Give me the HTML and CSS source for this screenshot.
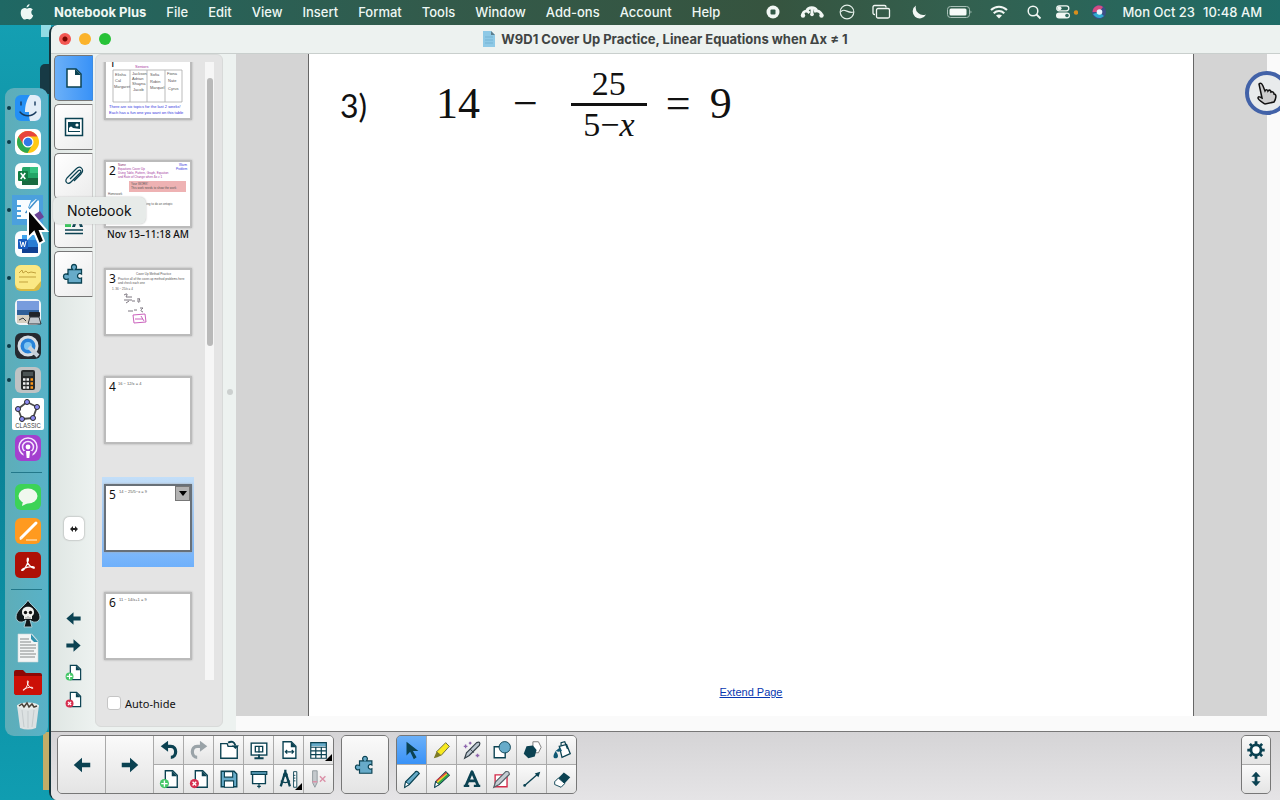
FILE: index.html
```html
<!DOCTYPE html>
<html lang="en">
<head>
    <meta charset="UTF-8">
    <meta name="viewport" content="width=device-width, initial-scale=1.0">
    <title>Notebook Plus</title>
    <link rel="stylesheet" href="styles.css">
</head>
<body>
    <!-- Shared icons -->
    <svg class="sprite" width="0" height="0">
        <symbol id="arrow-left" viewBox="0 0 24 24"><path d="M3 12l9-8v5.500h9v5h-9v5.500z" fill="#0b4252"/></symbol>
        <symbol id="arrow-right" viewBox="0 0 24 24"><path d="M21 12l-9-8v5.500H3v5h9v5.500z" fill="#0b4252"/></symbol>
        <symbol id="page-add" viewBox="0 0 24 24"><path d="M8 3h8l5 5v13H8z" fill="#fff" stroke="#0b4252" stroke-width="1.500"/><path d="M15 3v6h6z" fill="#0b4252"/><circle cx="7" cy="17" r="5" fill="#44c767"/><path d="M7 13.500v7M3.500 17h7" stroke="#fff" stroke-width="1.500"/></symbol>
        <symbol id="page-del" viewBox="0 0 24 24"><path d="M8 3h8l5 5v13H8z" fill="#fff" stroke="#0b4252" stroke-width="1.500"/><path d="M15 3v6h6z" fill="#0b4252"/><circle cx="7" cy="17" r="5" fill="#d62f4f"/><path d="M5 15l4 4M9 15l-4 4" stroke="#fff" stroke-width="1.500"/></symbol>
        <symbol id="puzzle" viewBox="0 0 24 24"><path d="M6 7.500h4.500c-2-2-1-5 1.500-5s3.500 3 1.500 5h6v4.500c-2-1.500-4 0-4 2s2 3 4 2v5H6v-4c-2 1-4.500 0-4.500-2.500S4 11.500 6 12.500z" fill="#67abc9" stroke="#0b4252" stroke-width="1.300"/></symbol>
        <symbol id="acrobat" viewBox="0 0 24 24"><path d="M3.500 19c0-3 17-7 17-3.500 0 3-11-4-9.500-11.500.5-2 2-1 1.500 1.500C11 12 6 21 3.500 19z" fill="none" stroke="#fff" stroke-width="1.600"/></symbol>
    </svg>

    <header class="menubar">
        <nav class="menus">
            <a href="#" aria-label="Apple"><svg width="14" height="16" viewBox="0 0 14 16"><path d="M9.500 0c.2 1.700-1.200 3.300-2.900 3.400C6.400 1.800 8 .2 9.500 0zM11.300 8.300c0-1.700 1.400-2.600 1.500-2.700-1-1.300-2.400-1.500-3-1.500-1.200 0-2 .7-2.700.7s-1.500-.7-2.600-.7C2.300 4.200.7 6 .7 8.900c0 3.200 2.200 6.600 3.900 6.600 1 0 1.400-.6 2.600-.6s1.500.6 2.600.6c1.500 0 3-2.500 3.400-4-.1 0-1.900-.8-1.900-3.200z" fill="#eef7f4"/></svg></a>
            <a href="#" class="app-name">Notebook Plus</a>
            <a href="#">File</a>
            <a href="#">Edit</a>
            <a href="#">View</a>
            <a href="#">Insert</a>
            <a href="#">Format</a>
            <a href="#">Tools</a>
            <a href="#">Window</a>
            <a href="#">Add-ons</a>
            <a href="#">Account</a>
            <a href="#">Help</a>
        </nav>
        <div class="status">
            <svg width="32" height="16" viewBox="0 0 32 16"><circle cx="17" cy="8" r="6.500" fill="#f2f7f4"/><rect x="14.500" y="5.500" width="5" height="5" rx="1" fill="#335a48"/></svg>
            <svg width="24" height="16" viewBox="0 0 24 16"><path d="M2.500 11.500C3 6.500 7 6 9.500 9M6.500 7C8.500 2.500 15 2.500 17 7M14 7.500c4-1.500 7 0 8 4M12 5v6" fill="none" stroke="#f2f7f4" stroke-width="2.800"/><circle cx="3" cy="11.500" r="2.200" fill="#f2f7f4"/><circle cx="12" cy="10.500" r="1.800" fill="#f2f7f4"/><circle cx="21.500" cy="11.500" r="2.200" fill="#f2f7f4"/></svg>
            <svg width="22" height="16" viewBox="0 0 22 16"><circle cx="11" cy="8" r="6.800" fill="none" stroke="#e3eee8" stroke-width="1.200"/><path d="M4.500 8c4-5 7 2 13 0" fill="none" stroke="#e3eee8" stroke-width="1.200"/></svg>
            <svg width="22" height="16" viewBox="0 0 22 16"><path d="M5 10.500H4.500A1.500 1.500 0 013 9V3a1.500 1.500 0 011.500-1.500h10A1.500 1.500 0 0116 3v.5" fill="none" stroke="#f2f7f4" stroke-width="1.300"/><rect x="6.500" y="4.500" width="13" height="9.500" rx="1.500" fill="none" stroke="#f2f7f4" stroke-width="1.300"/></svg>
            <svg width="30" height="16" viewBox="0 0 30 16"><path d="M12 1.500A7 7 0 1022 10.500 7.500 7.500 0 0112 1.500z" fill="#f2f7f4"/></svg>
            <svg width="26" height="16" viewBox="0 0 26 16"><rect x="1.500" y="2.500" width="22" height="11" rx="3" fill="none" stroke="#a9c0b8"/><rect x="3.500" y="4.500" width="17" height="7" rx="1.500" fill="#f6faf8"/><path d="M24.500 6.500v3q2-1.500 0-3z" fill="#a9c0b8"/></svg>
            <svg width="28" height="16" viewBox="0 0 28 16"><path d="M7 6c4.700-4.300 11.300-4.300 16 0M9.700 9.200c3.200-2.800 7.400-2.800 10.600 0" fill="none" stroke="#f2f7f4" stroke-width="2.100"/><path d="M12 11.500c1.800-1.400 4.200-1.400 6 0l-3 3z" fill="#f2f7f4"/></svg>
            <svg width="18" height="16" viewBox="0 0 18 16"><circle cx="9" cy="7" r="4.800" fill="none" stroke="#f2f7f4" stroke-width="1.500"/><path d="M12.500 10.500l4 4" stroke="#f2f7f4" stroke-width="1.800"/></svg>
            <svg width="24" height="16" viewBox="0 0 24 16"><rect x="2.800" y="1.800" width="12" height="5" rx="2.500" fill="none" stroke="#f2f7f4" stroke-width="1.300"/><circle cx="5.500" cy="4.300" r="2" fill="#f2f7f4"/><rect x="2" y="8.500" width="14" height="6" rx="3" fill="#f2f7f4"/><circle cx="13" cy="11.500" r="1.800" fill="#336b61"/><circle cx="22" cy="8.500" r="2.200" fill="#d98f1d"/></svg>
            <svg width="16" height="16" viewBox="0 0 16 16"><circle cx="9" cy="8" r="7" fill="#3b4f87"/><path d="M2.500 8C3 2 9 0 13 3L9 8z" fill="#d54c80"/><path d="M3 10c3 5 8 5 11 2L9 8z" fill="#2dacd0"/><circle cx="9.500" cy="8" r="2.800" fill="#e8f6ff"/></svg>
            <span class="date">Mon Oct 23</span><span>10:48 AM</span>
        </div>
    </header>

    <main class="desktop">
        <div class="behind file-corner"></div>
        <div class="behind dark-corner"></div>
        <div class="behind folder-edge"></div>

        <aside class="dock">
            <a href="#" class="open" aria-label="Finder"><svg viewBox="0 0 34 34"><rect x="4" y="4" width="26" height="26" rx="6" fill="#2490f5"/><path d="M19 4h5a6 6 0 016 6v14a6 6 0 01-6 6h-5c-1-3-1-6-1-9h-4C14 14 16 8 19 4z" fill="#e2edf7"/><path d="M10 11v3M24 11v3M9 21c4 5 12 5 16 0" stroke="#173a5e" stroke-width="1.400" fill="none" stroke-linecap="round"/></svg></a>
            <a href="#" class="open" aria-label="Chrome"><svg viewBox="0 0 34 34"><rect x="4" y="4" width="26" height="26" rx="6" fill="#fff"/><circle cx="17" cy="17" r="11" fill="#ffc914"/><path d="M7.500 11.500A11 11 0 0126.500 11.500H17l-5 8z" fill="#e8453c"/><path d="M7.500 11.500a11 11 0 009 16.500l5-8.500-9 .5z" fill="#2da94f"/><circle cx="17" cy="17" r="5.500" fill="#fff"/><circle cx="17" cy="17" r="4.300" fill="#3379e5"/></svg></a>
            <a href="#" aria-label="Excel"><svg viewBox="0 0 34 34"><rect x="4" y="4" width="26" height="26" rx="6" fill="#fbfdfc"/><rect x="11" y="8" width="16" height="18" rx="1.500" fill="#23a566"/><path d="M19 8h8v6h-8z" fill="#36c481"/><path d="M11 19h16v7H11z" fill="#17693f"/><rect x="7" y="12" width="10" height="10" rx="1" fill="#107c41"/><path d="M9.700 14l4.600 6M14.300 14l-4.600 6" stroke="#fff" stroke-width="1.600"/></svg></a>
            <a href="#" class="open active" aria-label="Notebook"><svg viewBox="0 0 34 34"><rect x="1" y="2" width="31" height="30" fill="#4ba0dd"/><path d="M6 7h14L15 20l13-13v19H6v-2h4v-2H6v-3h4v-2H6v-3h4v-2H6z" fill="#f8fcff"/><path d="M16 19l4-9 5-4 3 3z" fill="#f8fcff"/><path d="M14.500 20L26 7" stroke="#3d8fcc" stroke-width="1.500"/><path d="M23 22l6-4 4 6-6 4z" fill="#6b4497"/></svg></a>
            <a href="#" aria-label="Word"><svg viewBox="0 0 34 34"><rect x="4" y="4" width="26" height="26" rx="6" fill="#fbfdff"/><rect x="11" y="8" width="16" height="18" rx="1.500" fill="#2b7cd3"/><path d="M11 8h16v5H11z" fill="#41a5ee"/><path d="M11 20h16v6H11z" fill="#103f91"/><rect x="7" y="12" width="10" height="10" rx="1" fill="#185abd"/><path d="M9 14l1.500 6 1.500-5 1.500 5 1.500-6" fill="none" stroke="#fff"/></svg></a>
            <a href="#" class="open" aria-label="Stickies"><svg viewBox="0 0 34 34"><rect x="4" y="4" width="26" height="26" rx="6" fill="#d8b944"/><path d="M10 4h14a6 6 0 016 6v10l-7 8H10a6 6 0 01-6-6V10a6 6 0 016-6z" fill="#fae884"/><path d="M8 12l3-3 1 3 3-2 2 2 3-1 5 1M8 16h17M8 21h9" fill="none" stroke="#c1a13d"/></svg></a>
            <a href="#" aria-label="Preview"><svg viewBox="0 0 34 34"><rect x="4" y="4" width="26" height="26" rx="5" fill="#f2f5f9"/><rect x="6" y="6" width="22" height="13" fill="#789cdd"/><path d="M6 15h22v5H6z" fill="#305f98"/><path d="M6 20h22v8H6z" fill="#d7cfc0"/><path d="M8 25l4-2 3 3" stroke="#34393e" fill="none"/><rect x="18" y="17" width="11" height="5" rx="1" fill="#202428"/><path d="M19 22h9l2 7H17z" fill="#c1c7cc" stroke="#30353a"/></svg></a>
            <a href="#" class="open" aria-label="QuickTime Player"><svg viewBox="0 0 34 34"><rect x="4" y="4" width="26" height="26" rx="6" fill="#252a31"/><circle cx="17" cy="17" r="9" fill="#2883da" stroke="#d6dde4" stroke-width="3"/><circle cx="17" cy="17" r="4" fill="#7cc4f3"/><path d="M18 18l9 9" stroke="#c7d0d9" stroke-width="4"/></svg></a>
            <a href="#" class="open" aria-label="Calculator"><svg viewBox="0 0 34 34"><rect x="4" y="4" width="26" height="26" rx="6" fill="#bfc3c4"/><rect x="10" y="7" width="14" height="20" rx="2" fill="#26292a"/><path d="M12 9h10v4H12z" fill="#4b5354"/><path d="M12 16.500h7M12 20.500h7M12 24.500h7" stroke="#f0f0f0" stroke-width="2.500" stroke-dasharray="2.500 1"/><path d="M19.500 16.500H22M19.500 20.500H22M19.500 24.500H22" stroke="#ff9818" stroke-width="2.500"/></svg></a>
            <a href="#" aria-label="GeoGebra Classic"><svg viewBox="0 0 34 34"><rect x="1" y="1" width="32" height="32" rx="2" fill="#fff"/><path d="M16 5l10 5-4 11-11 1-4-10z" fill="none" stroke="#4c4c4c" stroke-width="1.800" stroke-linejoin="round"/><g fill="#8e8cf2" stroke="#292929"><circle cx="16" cy="5" r="2.500"/><circle cx="26" cy="10" r="2.500"/><circle cx="22" cy="21" r="2.500"/><circle cx="11" cy="22" r="2.500"/><circle cx="7" cy="12" r="2.500"/></g><text x="17" y="31" text-anchor="middle" class="geo-label">CLASSIC</text></svg></a>
            <a href="#" aria-label="Podcasts"><svg viewBox="0 0 34 34"><rect x="4" y="4" width="26" height="26" rx="6" fill="#a340cf"/><circle cx="17" cy="16" r="9" fill="none" stroke="#f6e5ff" stroke-width="1.500"/><circle cx="17" cy="16" r="5.500" fill="none" stroke="#f6e5ff" stroke-width="1.500"/><path d="M12.500 20h9v6h-9z" fill="#a340cf"/><circle cx="17" cy="16" r="2.400" fill="#fff"/><path d="M15 20h4l-.7 7h-2.600z" fill="#fff"/></svg></a>
            <hr>
            <a href="#" aria-label="Messages"><svg viewBox="0 0 34 34"><rect x="4" y="4" width="26" height="26" rx="6" fill="#3cd357"/><ellipse cx="17" cy="16" rx="9.500" ry="7.500" fill="#f0f8ee"/><path d="M12 21l-1 5 6-3z" fill="#f0f8ee"/></svg></a>
            <a href="#" aria-label="Pages"><svg viewBox="0 0 34 34"><rect x="4" y="4" width="26" height="26" rx="6" fill="#ff9a1f"/><path d="M10 24L25 9" stroke="#fff" stroke-width="3" stroke-linecap="round"/><path d="M9 26l2-3M15 26h11" stroke="#fff3de"/></svg></a>
            <a href="#" aria-label="Acrobat"><svg viewBox="0 0 34 34"><rect x="4" y="4" width="26" height="26" rx="5" fill="#ad1006"/><use href="#acrobat" x="8" y="8" width="18" height="18"/></svg></a>
            <hr>
            <a href="#" aria-label="Spade"><svg viewBox="0 0 34 34"><path d="M17 3c3 6 12 10 12 17 0 5-6 7-10 3l2 7h-8l2-7c-4 4-10 2-10-3C5 13 14 9 17 3z" fill="#111719" stroke="#a7cbd3"/><path d="M11 15c0-7 12-7 12 0 0 3-1 3-2 4v3h-8v-3c-1-1-2-1-2-4z" fill="#f0f0ed"/><circle cx="14.500" cy="15.500" r="1.700" fill="#111"/><circle cx="19.500" cy="15.500" r="1.700" fill="#111"/><path d="M15 20v2M17 19v3M19 20v2" stroke="#555" stroke-width=".6"/></svg></a>
            <a href="#" aria-label="Document"><svg viewBox="0 0 34 34"><path d="M7 3h14l6 7v21H7z" fill="#f3f5f5" stroke="#ced7d9" stroke-width=".6"/><path d="M20 3l7 8h-4l-3-3z" fill="#3193af"/><path d="M9 8h9M9 11h11M9 14h16M9 17h16M9 20h14M9 23h16M9 26h15" stroke="#858989"/></svg></a>
            <a href="#" aria-label="Acrobat folder"><svg viewBox="0 0 34 34"><path d="M3 7q0-2 2-2h7l3 3h14q2 0 2 2v17q0 3-3 3H6q-3 0-3-3z" fill="#8e0805"/><path d="M3 11h28v16q0 3-3 3H6q-3 0-3-3z" fill="#cc1007"/><use href="#acrobat" x="10" y="14" width="14" height="14"/></svg></a>
            <a href="#" aria-label="Trash"><svg viewBox="0 0 34 34"><path d="M6 6h22l-3 23q-8 3-16 0z" fill="#dce1e2"/><path d="M11 11l2 17M17 12v17M23 11l-2 17" stroke="#c5cbcd"/><ellipse cx="17" cy="7" rx="11" ry="3.500" fill="#e9edea"/><path d="M8 7l3-2 2 3 3-4 2 4 3-3 2 3 3-1" stroke="#494238" stroke-width="1.500" fill="none"/></svg></a>
        </aside>

        <section class="window">
            <div class="titlebar">
                <div class="lights">
                    <button class="close" aria-label="Close"></button>
                    <button class="minimize" aria-label="Minimize"></button>
                    <button class="zoom" aria-label="Zoom"></button>
                </div>
                <h1><svg width="12" height="16" viewBox="0 0 12 16"><path d="M0 0h8l4 4v12H0z" fill="#8ec9e6"/><path d="M8 0v4h4z" fill="#5c7d8d"/><path d="M2 6h8M2 9h8M2 12h8" stroke="#74b3d3"/></svg>W9D1 Cover Up Practice, Linear Equations when Δx ≠ 1</h1>
            </div>

            <div class="workspace">
                <div class="rail">
                    <button class="tab selected" aria-label="Page Sorter"><svg viewBox="0 0 24 24"><path d="M5 3h9l5 5v13H5z" fill="#fff" stroke="#0b4252" stroke-width="1.500"/><path d="M13 3v6h6z" fill="#0b4252"/></svg></button>
                    <button class="tab" aria-label="Gallery"><svg viewBox="0 0 24 24"><rect x="3.500" y="3.500" width="17" height="17" fill="#fff" stroke="#0b4252" stroke-width="1.500"/><path d="M6 7h12v10H6z" fill="#0b4252"/><path d="M7 13q2-3 4 0l7 1v2H7z" fill="#fff"/><circle cx="15" cy="10" r="1.600" fill="#fff"/></svg></button>
                    <button class="tab" aria-label="Attachments"><svg viewBox="0 0 24 24"><path d="M8 15l8-8c2-2 4 0 2 2l-9 9c-3 3-7 0-4-4l9-9c4-4 9 0 5 5l-7 7" fill="none" stroke="#0b4252" stroke-width="1.200"/></svg></button>
                    <button class="tab" aria-label="Properties"><svg viewBox="0 0 24 24"><rect x="3" y="7" width="6" height="7" fill="#35c759"/><path d="M10 14l4-11h3l4 11h-3l-1-3h-3l-1 3z" fill="#0b4252"/><path d="M3 17h18M3 20.500h18" stroke="#0b4252" stroke-width="1.500"/></svg></button>
                    <button class="tab" aria-label="Add-ons"><svg viewBox="0 0 24 24"><use href="#puzzle"/></svg></button>
                    <button class="swap" aria-label="Move sidebar"><svg width="8" height="6" viewBox="0 0 8 6"><path d="M0 3l3-3v2h2V0l3 3-3 3V4H3v2z" fill="#222"/></svg></button>
                    <button class="step" aria-label="Previous page"><svg><use href="#arrow-left"/></svg></button>
                    <button class="step" aria-label="Next page"><svg><use href="#arrow-right"/></svg></button>
                    <button class="step" aria-label="Add page"><svg><use href="#page-add"/></svg></button>
                    <button class="step" aria-label="Delete page"><svg><use href="#page-del"/></svg></button>
                </div>

                <div class="sorter">
                    <div class="list">
                        <ul>
                            <li>
                                <div class="thumb"><span class="num">1</span>
                                    <svg viewBox="0 0 84 64"><g class="mini"><text x="29" y="14" fill="#a53aa0">Seniors</text><path d="M7 16h69v32H7zM24 16v32M41 16v32M59 16v32" fill="none" stroke="#aaa" stroke-width=".8"/><text x="9" y="22">Elisha</text><text x="9" y="28">Cal</text><text x="8" y="34">Margaret</text><text x="26" y="21">Jackson</text><text x="26" y="26">Adrian</text><text x="26" y="31">Shayna</text><text x="27" y="37">Jacob</text><text x="44" y="22">Sofia</text><text x="44" y="29">Robin</text><text x="44" y="35">Marquel</text><text x="61" y="21">Fiona</text><text x="62" y="28">Nate</text><text x="62" y="36">Cyrus</text><text x="3" y="54" fill="#3434e0">There are six topics for the last 2 weeks!</text><text x="3" y="60" fill="#3434e0">Each has a fun one you want on this table</text></g></svg>
                                </div>
                            </li>
                            <li>
                                <div class="thumb"><span class="num">2</span>
                                    <svg viewBox="0 0 84 64"><g class="mini small"><text x="12" y="4" fill="#8c326e">Name</text><text x="12" y="8" fill="#a53aa0">Equations Cover Up</text><text x="12" y="12" fill="#a53aa0">Using Table, Pattern, Graph, Equation</text><text x="12" y="16" fill="#a53aa0">and Rate of Change when Δx ≠ 1</text><text x="73" y="4" fill="#3434e0">Warm</text><text x="70" y="8" fill="#3434e0">Problem</text><rect x="23" y="19" width="57" height="11" fill="#eeb2b3"/><text x="25" y="23">Your WORK!</text><text x="25" y="27">This work needs to show the work</text><text x="2" y="33">Homework</text><text x="38" y="43">thing to do an ontopic</text></g></svg>
                                </div>
                                <p>Nov 13–11:18 AM</p>
                            </li>
                            <li>
                                <div class="thumb"><span class="num">3</span>
                                    <svg viewBox="0 0 84 64"><g class="mini small"><text x="30" y="5">Cover Up Method Practice</text><text x="12" y="10">Practice all of the cover-up method problems here</text><text x="12" y="14">and check each one</text><text x="6" y="20">1.   36 − 25/x = 4</text></g><path d="M18 25q5-3 2 2h6M18 30h8M20 33l3-2M26 31h3M32 28v4q3 1 1-4M22 41h5M28 40h3M34 38h3q-4 3 0 4" fill="none" stroke="#7d7780"/><path d="M27 45l12-1 1 8-12 1z M29 49h8M35 46l3 5" fill="none" stroke="#cb62bd"/></svg>
                                </div>
                            </li>
                            <li>
                                <div class="thumb"><span class="num">4</span>
                                    <svg viewBox="0 0 84 64"><g class="mini"><text x="12" y="7">16  −  12/x = 4</text></g></svg>
                                </div>
                            </li>
                            <li class="current">
                                <div class="thumb"><span class="num">5</span>
                                    <svg viewBox="0 0 84 64"><g class="mini"><text x="13" y="7">14  −  25/5−x = 9</text></g></svg>
                                    <button aria-label="Page menu"><svg width="10" height="7" viewBox="0 0 10 7"><path d="M1 1h8L5 6z"/></svg></button>
                                </div>
                            </li>
                            <li>
                                <div class="thumb"><span class="num">6</span>
                                    <svg viewBox="0 0 84 64"><g class="mini"><text x="13" y="7">11  −  14/x+1 = 9</text></g></svg>
                                </div>
                            </li>
                        </ul>
                        <div class="scrollbar"><div class="handle"></div></div>
                    </div>
                    <label class="auto-hide"><input type="checkbox">Auto-hide</label>
                </div>

                <div class="splitter"></div>

                <div class="canvas">
                    <article class="page">
                        <div class="problem">
                            <span class="label">3)</span>
                            <span>14</span>
                            <span class="minus">−</span>
                            <span class="fraction"><span class="top">25</span><span>5−<i>x</i></span></span>
                            <span>=</span>
                            <span>9</span>
                        </div>
                        <a href="#" class="extend">Extend Page</a>
                    </article>
                </div>
            </div>

            <footer class="toolbar">
                <div class="tools main-tools">
                    <button class="big" aria-label="Previous page"><svg><use href="#arrow-left"/></svg></button>
                    <button class="big" aria-label="Next page"><svg><use href="#arrow-right"/></svg></button>
                    <button aria-label="Undo"><svg viewBox="0 0 24 24"><path d="M9 8h5c7 0 7 12 0 12" fill="none" stroke="#0b4252" stroke-width="3.500"/><path d="M3 8l8-6v12z" fill="#0b4252"/></svg></button>
                    <button aria-label="Redo"><svg viewBox="0 0 24 24"><path d="M15 8h-5c-7 0-7 12 0 12" fill="none" stroke="#9aa3a8" stroke-width="3.500"/><path d="M21 8l-8-6v12z" fill="#9aa3a8"/></svg></button>
                    <button aria-label="Open"><svg viewBox="0 0 24 24"><path d="M3 5h7l1 3h10v13H3z" fill="#fff" stroke="#0b4252" stroke-width="1.500"/><path d="M11 4q6-3 8 3" fill="none" stroke="#0b4252" stroke-width="2"/><path d="M15 7h8l-4 4z" fill="#0b4252"/></svg></button>
                    <button aria-label="Dual page display"><svg viewBox="0 0 24 24"><rect x="3.500" y="4.500" width="17" height="13" fill="#fff" stroke="#0b4252" stroke-width="1.500"/><path d="M8 8h8v6H8zM12 8v7" fill="none" stroke="#0b4252" stroke-width="1.500"/><path d="M12 17v3M7 21h10" stroke="#0b4252" stroke-width="2"/></svg></button>
                    <button aria-label="Fit page width"><svg viewBox="0 0 24 24"><path d="M5.500 3h9l5 5v13h-14z" fill="#fff" stroke="#0b4252" stroke-width="1.500"/><path d="M14 3v6h6z" fill="#0b4252"/><path d="M8 14h9M10 12l-2 2 2 2M15 12l2 2-2 2" stroke="#0b4252" stroke-width="1.300" fill="none"/></svg></button>
                    <button class="more" aria-label="Table"><svg viewBox="0 0 24 24"><path d="M3 4h17v17H3z" fill="#fff"/><path d="M3 4h17v4H3z" fill="#67abc9"/><path d="M3 4h17v17H3zM3 9h17M3 13h17M3 17h17M8.500 9v12M14.500 9v12" fill="none" stroke="#0b4252" stroke-width="1.300"/></svg></button>
                    <button aria-label="Add page"><svg><use href="#page-add"/></svg></button>
                    <button aria-label="Delete page"><svg><use href="#page-del"/></svg></button>
                    <button aria-label="Save"><svg viewBox="0 0 24 24"><path d="M3.500 3.500h14l3 3v14h-17z" fill="#67abc9" stroke="#0b4252" stroke-width="1.500"/><path d="M7 4h9v6H7zM7 14h10v7H7z" fill="#fff" stroke="#0b4252" stroke-width="1.200"/></svg></button>
                    <button aria-label="Screen shade"><svg viewBox="0 0 24 24"><path d="M5 7h14v10H5z" fill="#fff" stroke="#0b4252" stroke-width="1.500"/><path d="M3.500 4h17v3h-17z" fill="#67abc9" stroke="#0b4252" stroke-width="1.300"/><path d="M12 17v5M10 20h4" stroke="#0b4252" stroke-width="1.300"/></svg></button>
                    <button class="more" aria-label="Measurement tools"><svg viewBox="0 0 24 24"><path d="M8 2v4M7 7L3 20M9 7l4 13" fill="none" stroke="#0b4252" stroke-width="2.500"/><path d="M3 14q5 4 10 0" fill="none" stroke="#0b4252" stroke-width="1.300"/><circle cx="8" cy="7" r="2.500" fill="#0b4252"/><path d="M17 4h3.500v17H17z" fill="#fff" stroke="#0b4252"/><path d="M17 8h2M17 11h2M17 14h2" stroke="#0b4252"/></svg></button>
                    <button aria-label="Remove pen"><svg viewBox="0 0 24 24"><path d="M5 3h5v13l-2.500 5L5 16z" fill="#c4c9cd" stroke="#8f999e"/><path d="M5 15h5M13 9l6 6M19 9l-6 6" stroke="#db91a8" stroke-width="1.500"/></svg></button>
                </div>

                <div class="tools">
                    <button class="big" aria-label="Add-ons"><svg><use href="#puzzle"/></svg></button>
                </div>

                <div class="tools draw-tools">
                    <button class="selected" aria-label="Select"><svg viewBox="0 0 24 24"><path d="M6 3l13 10h-6l4 7-3 2-4-8-4 4z" fill="#0b4252"/></svg></button>
                    <button aria-label="Highlighter"><svg viewBox="0 0 24 24"><path d="M16 4l4 4-9 10-5-4z" fill="#f7e920" stroke="#636238"/><path d="M6 14l5 4-4 2-4 1z" fill="#7d7b27"/></svg></button>
                    <button aria-label="Magic pen"><svg viewBox="0 0 24 24"><path d="M17 4q5-2 3 3l-11 11-5 3 2-6z" fill="#bac5cf" stroke="#344149" stroke-width="1.300"/><path d="M10 11l4 4" stroke="#344149"/><path d="M5 6v4M3 8h4M10 3v3M8.500 4.500h3M18 16v4M16 18h4" stroke="#8d65ad" stroke-width="1.500"/></svg></button>
                    <button aria-label="Shapes"><svg viewBox="0 0 24 24"><path d="M3.500 8.500h12v12h-12z" fill="#fff" stroke="#0b4252" stroke-width="1.500"/><circle cx="15" cy="9" r="6.200" fill="#67abc9" stroke="#0b4252"/></svg></button>
                    <button aria-label="Polygon"><svg viewBox="0 0 24 24"><path d="M13 3h6l3 6-3 6h-6z" fill="#fff" stroke="#777"/><path d="M6 8l7-1 4 5-2 7-7 2-5-5z" fill="#0b4252"/></svg></button>
                    <button aria-label="Fill"><svg viewBox="0 0 24 24"><path d="M9 8l8-2 4 10-9 4z" fill="#fff" stroke="#0b4252" stroke-width="1.400"/><path d="M11 7V4l4-1 3 8" fill="none" stroke="#0b4252" stroke-width="1.300"/><path d="M5 13c4 5 3 8 0 8s-3-3 0-8zM5 13l5-4 2 4-4 1z" fill="#0f5873"/></svg></button>
                    <button aria-label="Pen"><svg viewBox="0 0 24 24"><path d="M15 5q2-3 5 1L9 18l-5 3 1-6z" fill="#67abc9" stroke="#0b4252" stroke-width="1.300"/><path d="M5 15l4 3-5 3z" fill="#fff" stroke="#0b4252"/></svg></button>
                    <button aria-label="Crayon"><svg viewBox="0 0 24 24"><path d="M16 4l4 4L9 18l-5 3 1-6z" fill="#f2d22a" stroke="#0b4252" stroke-width="1.200"/><path d="M6 14L17 5" stroke="#da3b46" stroke-width="1.500"/><path d="M8 17L19 7" stroke="#2aa652" stroke-width="2"/><path d="M5 15l4 3-5 3z" fill="#fff" stroke="#0b4252"/></svg></button>
                    <button aria-label="Text"><svg viewBox="0 0 24 24"><path d="M5.500 19L12 4l6.500 15M8 14h8" fill="none" stroke="#0b4252" stroke-width="3" stroke-linejoin="round"/><path d="M3 19.500h6M14 19.500h7" stroke="#0b4252" stroke-width="2.500"/></svg></button>
                    <button aria-label="Shape recognition pen"><svg viewBox="0 0 24 24"><path d="M4.500 7.500h13v13h-13z" fill="#fff" stroke="#d42b4a" stroke-width="1.500"/><path d="M16 4q4-1 4 3L9 18l-6 3 2-6z" fill="#c3ccd2" stroke="#566168" stroke-width="1.300"/></svg></button>
                    <button aria-label="Line"><svg viewBox="0 0 24 24"><path d="M4 19L19 6" stroke="#0b4252" stroke-width="1.500"/><circle cx="4" cy="19" r="1.500" fill="#0b4252"/><path d="M21 4l-2 6-4-4z" fill="#0b4252"/></svg></button>
                    <button aria-label="Eraser"><svg viewBox="0 0 24 24"><path d="M14 5l7 5-9 10-8-5z" fill="#0b4252"/><path d="M8 11l7 6-4 4-7-3v-3z" fill="#fff" stroke="#0b4252"/></svg></button>
                </div>

                <div class="tools side-tools">
                    <button aria-label="Customize"><svg viewBox="0 0 24 24"><circle cx="12" cy="12" r="5.500" fill="#fff" stroke="#0b4252" stroke-width="3"/><path d="M12 2.500v4M12 17.500v4M2.500 12h4M17.500 12h4M5.300 5.300l2.800 2.800M15.900 15.900l2.800 2.800M5.300 18.700l2.800-2.800M15.900 8.100l2.800-2.800" stroke="#0b4252" stroke-width="3"/></svg></button>
                    <button aria-label="Move toolbar"><svg viewBox="0 0 24 24"><path d="M12 4l5 5.500h-3.500v5H17L12 20l-5-5.500h3.500v-5H7z" fill="#0b4252"/></svg></button>
                </div>
            </footer>
        </section>

        <div class="tooltip" role="tooltip">Notebook</div>
        <svg class="pointer" width="24" height="40" viewBox="0 0 24 40"><path d="M2 2v29l6-6 5 12 5-3-4-10h7z" fill="#050505" stroke="#fff" stroke-width="2"/></svg>
        <div class="spotlight"><svg width="24" height="24" viewBox="0 0 24 24"><path d="M4 3c2-2 3 0 4 2l2 5c1-2 3-1 3 0 2-2 3 0 3 1 2-1 3 1 3 2 3 0 2 5 0 8l-9 2c-3-2-7-4-7-6 0-2 2-1 4 0z" fill="#ccc" stroke="#111" stroke-width="1.500"/></svg></div>
    </main>
</body>
</html>
```

FILE: styles.css
```css
:root {
    --ink: #0b4252;
    --line: #777;
    --blue: #6bb0f8;
}

* {
    box-sizing: border-box;
}

body {
    margin: 0;
    height: 100vh;
    display: flex;
    flex-direction: column;
    overflow: hidden;
    font-family: Inter, "Liberation Sans", sans-serif;
    font-size: 13px;
    color: #111;
}

button {
    padding: 0;
    border: none;
    background: none;
    font: inherit;
    color: var(--ink);
}

svg {
    display: block;
    flex: none;
}

.sprite {
    position: absolute;
}

/* Menu bar */
.menubar {
    height: 25px;
    flex: none;
    display: flex;
    justify-content: space-between;
    padding: 0 18px 2px 20px;
    background: linear-gradient(90deg, #1f6864, #335a4a 35%, #36543f 60%, #33604f 75%, #1f6c67);
    color: #eef7f4;
    font-weight: 500;
    white-space: nowrap;
}

.menus, .status {
    display: flex;
    align-items: center;
}

.menus {
    gap: 20px;
}

.menus a {
    color: inherit;
    text-decoration: none;
}

.menus .app-name {
    font-weight: 700;
}

.status {
    gap: 12px;
}

.status .date {
    margin-left: 4px;
    margin-right: -4px;
}

/* Desktop and dock */
.desktop {
    position: relative;
    flex: 1;
    min-height: 0;
    display: flex;
    gap: 1px;
    padding-left: 5px;
    background: linear-gradient(180deg, #149fb2, #087f93 50%, #109db1);
}

.behind {
    position: absolute;
}

.file-corner {
    left: 41px;
    top: 0;
    width: 10px;
    height: 12px;
    background: #91dce5;
}

.dark-corner {
    left: 40px;
    top: 39px;
    width: 12px;
    height: 30px;
    border-radius: 5px 0 0 0;
    background: #173a45;
}

.folder-edge {
    left: 43px;
    bottom: 10px;
    width: 8px;
    height: 58px;
    background: #c3ad68;
}

.dock {
    position: relative;
    align-self: center;
    width: 43px;
    margin-bottom: 2px;
    padding: 3px 2px;
    border-radius: 9px;
    background: linear-gradient(90deg, #5eadb8, #58b2c8);
}

.dock a {
    display: flex;
    align-items: center;
    height: 34px;
}

.dock a::before {
    content: "";
    width: 4px;
    height: 4px;
    border-radius: 50%;
}

.dock .open::before {
    background: #0b3a49;
}

.dock a svg {
    width: 34px;
    height: 34px;
}

.dock hr {
    width: 31px;
    height: 1px;
    margin: 7px 4px;
    border: none;
    background: #23788a;
}

.geo-label {
    font: 6px Inter, sans-serif;
    fill: #444;
}

/* Notebook window */
.window {
    position: relative;
    flex: 1;
    min-width: 0;
    display: flex;
    flex-direction: column;
    border-left: 2px solid #15323a;
    border-radius: 8px 0 0 8px;
    background: #edf2f0;
    overflow: hidden;
}

.titlebar {
    height: 28px;
    flex: none;
    display: grid;
    grid-template-columns: 1fr auto 1fr;
    align-items: center;
    padding: 0 8px;
    box-shadow: 0 1px #c9cfcd;
    z-index: 1;
}

.titlebar h1 {
    display: flex;
    align-items: center;
    gap: 6px;
    margin: 0;
    font-size: 13px;
    font-weight: 700;
    color: #404443;
}

.lights {
    display: flex;
    gap: 8px;
}

.lights button {
    width: 12px;
    height: 12px;
    border-radius: 50%;
}

.close {
    background: radial-gradient(circle, #790500 0 2px, #f35752 3px);
}

.minimize {
    background: #fbb32b;
}

.zoom {
    background: #27c238;
}

.workspace {
    flex: 1;
    min-height: 0;
    display: flex;
}

.rail {
    width: 44px;
    display: flex;
    flex-direction: column;
    align-items: center;
    padding: 2px 2px 18px 3px;
    background: linear-gradient(90deg, #dfe6e3, #edf2f0);
}

.tab {
    width: 39px;
    height: 46px;
    margin-bottom: 3px;
    display: grid;
    place-items: center;
    border: 1px solid var(--line);
    border-right-color: #ccc;
    border-radius: 5px 0 0 5px;
    background: linear-gradient(135deg, #fff, #ececec);
}

.tab.selected {
    border-right-color: #3b8be4;
    background: linear-gradient(90deg, #6bb0f8, #3992f7);
}

.tab svg {
    width: 24px;
    height: 24px;
}

.swap {
    width: 20px;
    height: 23px;
    margin-top: auto;
    margin-bottom: 65px;
    display: grid;
    place-items: center;
    border-radius: 5px;
    background: #fff;
    box-shadow: 0 0 2px #888;
}

.step {
    height: 27px;
    display: grid;
    place-items: center;
}

.step svg {
    width: 19px;
    height: 19px;
}

/* Page sorter */
.sorter {
    width: 128px;
    margin: 1px 0 4px;
    padding: 7px 8px 0 6px;
    display: flex;
    flex-direction: column;
    border: 1px solid #d8dad9;
    border-radius: 6px;
    background: #e4e4e4;
    font-family: "Noto Sans", "Open Sans", sans-serif;
}

.list {
    flex: 1;
    min-height: 0;
    display: flex;
    justify-content: space-between;
    overflow: hidden;
}

.list ul {
    width: 92px;
    margin: -17px 0 0;
    padding: 0;
    list-style: none;
}

.list li {
    height: 90px;
    margin-bottom: 18px;
    padding: 7px 2px 0;
}

.list .current {
    background: linear-gradient(180deg, #c3def8, #6fb0fb);
}

.thumb {
    position: relative;
    height: 68px;
    border: 2px solid #bbb;
    background: #fff;
    box-shadow: 0 0 2px #aaa;
}

.current .thumb {
    border-color: #687078;
}

.thumb > svg {
    width: 100%;
    height: 100%;
}

.num {
    position: absolute;
    left: 3px;
    top: 2px;
    font-size: 12px;
    line-height: 14px;
}

.thumb button {
    position: absolute;
    top: 0;
    right: 0;
    width: 15px;
    height: 15px;
    display: grid;
    place-items: center;
    border: 1px solid #777;
    background: #b2b2b2;
}

.mini {
    font-family: "Liberation Sans", sans-serif;
    font-size: 4px;
    fill: #555;
}

.mini.small {
    font-size: 3px;
}

.list p {
    margin: 0 -2px;
    text-align: center;
    font-size: 10px;
    line-height: 13px;
    font-weight: 500;
    white-space: nowrap;
}

.scrollbar {
    width: 9px;
    padding: 16px 1px 0 2px;
    background: #f6f6f6;
}

.handle {
    height: 268px;
    border-radius: 3px;
    background: #b9b9b9;
}

.auto-hide {
    height: 46px;
    display: flex;
    align-items: center;
    gap: 4px;
    padding-left: 5px;
    font-size: 11px;
}

.auto-hide input {
    appearance: none;
    width: 14px;
    height: 14px;
    margin: 0;
    border: 1px solid #c5c5c5;
    border-radius: 3px;
    background: #fff;
}

.splitter {
    width: 13px;
    display: grid;
    place-items: center;
}

.splitter::before {
    content: "";
    width: 6px;
    height: 6px;
    border-radius: 50%;
    background: #ccd0cf;
}

/* Page canvas */
.canvas {
    flex: 1;
    display: flex;
    padding: 0 13px 15px 0;
    background: #fafafa;
}

.page {
    flex: 1;
    display: flex;
    flex-direction: column;
    justify-content: space-between;
    padding: 12px 32px 17px;
    border: solid #d4d4d4;
    border-width: 0 73px 0 72px;
    background: #fff;
    box-shadow: inset 1px 0 #666, inset -1px 0 #666;
}

.problem {
    display: flex;
    align-items: center;
    gap: 19px;
    height: 78px;
    font: 44px/50px "Liberation Serif", serif;
}

.label {
    width: 77px;
    padding-top: 4px;
    font: 32px/36px Lato, sans-serif;
}

.minus {
    margin: 0 14px;
}

.fraction {
    width: 76px;
    display: flex;
    flex-direction: column;
    align-items: center;
    font-size: 34px;
    line-height: 38px;
}

.fraction .top {
    align-self: stretch;
    border-bottom: 3px solid #111;
    text-align: center;
}

.extend {
    align-self: center;
    font: 11px/14px "Liberation Sans", sans-serif;
    color: #0837b0;
}

/* Bottom toolbar */
.toolbar {
    flex: none;
    display: flex;
    gap: 7px;
    padding: 3px 9px 6px 6px;
    border-top: 1px solid var(--line);
    background: linear-gradient(180deg, #d5d4d6, #e5e4e6);
}

.tools {
    display: grid;
    grid-template-rows: 28px 28px;
    gap: 1px;
    border: 1px solid var(--line);
    border-radius: 5px;
    background: #aaa;
    overflow: hidden;
}

.main-tools {
    grid-template-columns: 47px 47px repeat(6, 29px);
}

.draw-tools {
    grid-template-columns: repeat(6, 29px);
}

.side-tools {
    grid-template-columns: 28px;
    margin-left: auto;
}

.tools button {
    position: relative;
    display: grid;
    place-items: center;
    background: linear-gradient(180deg, #fafafa, #e4e4e4);
}

.tools .big {
    grid-row: span 2;
    min-width: 46px;
}

.tools .selected {
    background: linear-gradient(180deg, var(--blue), #3992f7);
}

.tools svg {
    width: 22px;
    height: 22px;
}

.more::after {
    content: "";
    position: absolute;
    right: 1px;
    bottom: 3px;
    border-left: 7px solid transparent;
    border-bottom: 7px solid #000;
}

/* Things floating over the desktop */
.tooltip {
    position: absolute;
    left: 53px;
    top: 172px;
    padding: 5px 14px;
    border-radius: 6px;
    background: #e7ebe9;
    box-shadow: 0 0 2px #bbb;
    font-size: 14px;
    line-height: 17px;
}

.pointer {
    position: absolute;
    left: 26px;
    top: 182px;
}

.spotlight {
    position: absolute;
    right: -9px;
    top: 46px;
    width: 44px;
    height: 44px;
    display: grid;
    place-items: center;
    border: 4px solid #4262a8;
    border-radius: 50%;
    background: #e8ebec;
}
```
